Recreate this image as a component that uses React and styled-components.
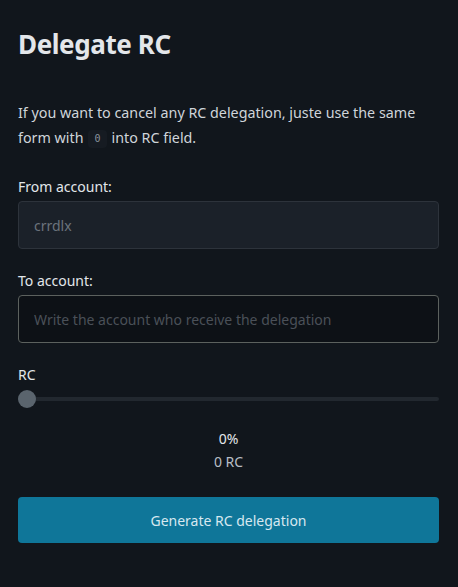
import React from 'react';
import styled, { createGlobalStyle } from 'styled-components';

const GlobalStyle = createGlobalStyle`
  html, body {
    margin: 0;
    background: #11161c;
  }
  body {
    font-family: 'Noto Sans', 'Open Sans', sans-serif;
    color: #d8dde3;
  }
`;

const Page = styled.div`
  width: 458px;
  min-height: 587px;
  box-sizing: border-box;
  padding: 26px 19px 0 18px;
  display: flex;
  flex-direction: column;
`;

const Title = styled.h1`
  margin: 0;
  font-size: 26px;
  font-weight: 700;
  letter-spacing: -0.4px;
  color: #e3e6ea;
  line-height: 36px;
`;

const Intro = styled.p`
  margin: 38px 0 0;
  font-size: 14.3px;
  line-height: 25px;
  color: #cfd4da;
`;

const Code = styled.code`
  display: inline-block;
  font-family: 'DejaVu Sans Mono', monospace;
  font-size: 10px;
  line-height: 18px;
  color: #8b949e;
  background: #161b22;
  padding: 0 6px;
  margin: 0 5px;
  border-radius: 4px;
  vertical-align: 1px;
`;

const Field = styled.div`
  display: flex;
  flex-direction: column;
  margin-top: ${p => p.$top}px;
`;

const Label = styled.label`
  font-size: 14px;
  line-height: 20px;
  color: #e2e6ea;
  margin-bottom: 4px;
`;

const Input = styled.input`
  box-sizing: border-box;
  height: 48px;
  width: 100%;
  padding: 0 15px;
  border-radius: 4px;
  font-family: inherit;
  font-size: 14px;
  outline: none;
  border: 1px solid ${p => (p.disabled ? '#2d333b' : '#5c615e')};
  background: ${p => (p.disabled ? '#1b2129' : '#0d1116')};
  color: #6b737c;
  &::placeholder {
    color: #4a5058;
  }
`;

const Track = styled.div`
  position: relative;
  height: 4px;
  background: #22282f;
  border-radius: 2px;
  margin: 8px 0 0;
`;

const Thumb = styled.div`
  position: absolute;
  left: 0;
  top: -7px;
  width: 18px;
  height: 18px;
  border-radius: 50%;
  background: #5a646d;
`;

const Summary = styled.div`
  margin-top: 26px;
  display: flex;
  flex-direction: column;
  align-items: center;
  font-size: 14px;
  line-height: 23px;
`;

const Percent = styled.span`
  color: #e4e7eb;
`;

const Amount = styled.span`
  color: #b8bec5;
`;

const Button = styled.button`
  margin-top: 24px;
  height: 46px;
  width: 100%;
  border: none;
  border-radius: 4px;
  background: #0f7699;
  color: #d7e8f0;
  font-family: inherit;
  font-size: 14px;
  cursor: pointer;
`;

export default function App() {
  return (
    <>
      <GlobalStyle />
      <Page>
        <Title>Delegate RC</Title>
        <Intro>
          If you want to cancel any RC delegation, juste use the same form with
          <Code>0</Code>into RC field.
        </Intro>
        <Field $top={27}>
          <Label>From account:</Label>
          <Input disabled value="crrdlx" readOnly />
        </Field>
        <Field $top={22}>
          <Label>To account:</Label>
          <Input placeholder="Write the account who receive the delegation" />
        </Field>
        <Field $top={22}>
          <Label>RC</Label>
          <Track>
            <Thumb />
          </Track>
        </Field>
        <Summary>
          <Percent>0%</Percent>
          <Amount>0 RC</Amount>
        </Summary>
        <Button>Generate RC delegation</Button>
      </Page>
    </>
  );
}
